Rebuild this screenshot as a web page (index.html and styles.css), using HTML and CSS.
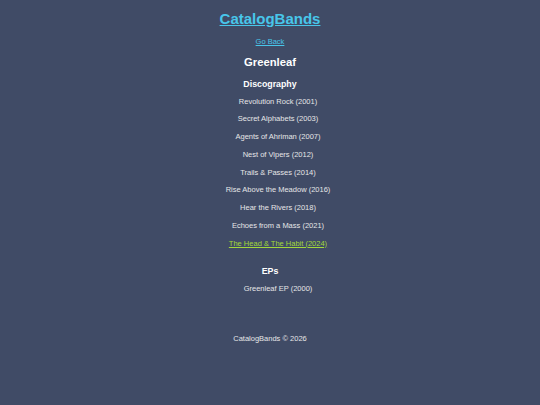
FILE: index.html
```html
<!DOCTYPE html>
<html lang="en">
<head>
  <meta charset="UTF-8">
  <title>Greenleaf - CatalogBands</title>
  <meta name="viewport" content="width=device-width, initial-scale=1.0">
  <link rel="stylesheet" href="styles.css">
</head>
<body>

  <!-- Topo -->
  <header class="top">
    <h1><a href="#" class="brand">CatalogBands</a></h1>
    <a href="#" class="back">Go Back</a>
  </header>

  <main class="band">
    <h2 class="band-name">Greenleaf</h2>

    <!-- Albuns -->
    <section class="block">
      <h3>Discography</h3>
      <ul class="albums">
        <li>Revolution Rock (2001)</li>
        <li>Secret Alphabets (2003)</li>
        <li>Agents of Ahriman (2007)</li>
        <li>Nest of Vipers (2012)</li>
        <li>Trails &amp; Passes (2014)</li>
        <li>Rise Above the Meadow (2016)</li>
        <li>Hear the Rivers (2018)</li>
        <li>Echoes from a Mass (2021)</li>
        <li><a href="#" class="latest">The Head &amp; The Habit (2024)</a></li>
      </ul>
    </section>

    <!-- EPs -->
    <section class="block eps">
      <h3>EPs</h3>
      <ul class="albums">
        <li>Greenleaf EP (2000)</li>
      </ul>
    </section>
  </main>

  <footer class="footer">CatalogBands &copy; 2026</footer>

</body>
</html>
```

FILE: styles.css
```css
* { box-sizing: border-box; margin: 0; padding: 0; }

body {
  font-family: "Liberation Sans", Arial, sans-serif;
  font-size: 7.5px;
  background: #404b66;
  color: #e6e6e6;
  text-align: center;
  height: 100vh;
}

.top {
  display: flex;
  flex-direction: column;
  align-items: center;
  padding-top: 10px;
}

.top h1 {
  font-size: 15px;
  line-height: 18px;
}

.brand {
  color: #48c6ea;
}

.back {
  margin-top: 9px;
  line-height: 10px;
  color: #48c6ea;
}

.band-name {
  margin-top: 8px;
  font-size: 11.25px;
  line-height: 14px;
  color: #fff;
}

.block h3 {
  margin-top: 10px;
  font-size: 8.8px;
  line-height: 10px;
  color: #fff;
}

.albums {
  list-style: none;
  display: flex;
  flex-direction: column;
  gap: 7.75px;
  margin-top: 7.5px;
  padding-left: 16px;
}

.albums li {
  line-height: 10px;
}

.latest {
  color: #a2d83a;
}

.eps h3 {
  margin-top: 17.5px;
}

.eps .albums {
  margin-top: 8px;
}

.footer {
  margin-top: 40px;
  line-height: 10px;
}
```
